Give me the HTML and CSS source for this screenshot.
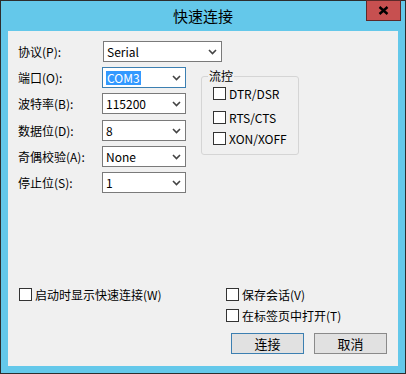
FILE: index.html
```html
<!DOCTYPE html>
<html lang="zh-CN">
<head>
<meta charset="UTF-8">
<title>快速连接</title>
<link rel="stylesheet" href="styles.css">
</head>
<body>

<div class="window">
  <div class="titlebar">
    <span></span>
    <div class="title">快速连接</div>
    <div class="close">
      <svg width="11" height="9" viewBox="0 0 11 9"><path d="M1.5 1 L9.5 8 M9.5 1 L1.5 8" stroke="#000" stroke-width="2.4"/></svg>
    </div>
  </div>

  <div class="client">
    <div class="row proto">
      <span class="label">协议(P):</span>
      <div class="combo wide"><span>Serial</span><svg class="arrow" width="9" height="6" viewBox="0 0 9 6"><polyline points="1,1 4.5,4.5 8,1" fill="none" stroke="#444" stroke-width="1.6"/></svg></div>
    </div>

    <div class="main">
      <div class="fields">
        <div class="row">
          <span class="label">端口(O):</span>
          <div class="combo focus"><span class="sel">COM3</span><svg class="arrow" width="9" height="6" viewBox="0 0 9 6"><polyline points="1,1 4.5,4.5 8,1" fill="none" stroke="#444" stroke-width="1.6"/></svg></div>
        </div>
        <div class="row">
          <span class="label">波特率(B):</span>
          <div class="combo"><span>115200</span><svg class="arrow" width="9" height="6" viewBox="0 0 9 6"><polyline points="1,1 4.5,4.5 8,1" fill="none" stroke="#444" stroke-width="1.6"/></svg></div>
        </div>
        <div class="row">
          <span class="label">数据位(D):</span>
          <div class="combo"><span>8</span><svg class="arrow" width="9" height="6" viewBox="0 0 9 6"><polyline points="1,1 4.5,4.5 8,1" fill="none" stroke="#444" stroke-width="1.6"/></svg></div>
        </div>
        <div class="row">
          <span class="label">奇偶校验(A):</span>
          <div class="combo"><span>None</span><svg class="arrow" width="9" height="6" viewBox="0 0 9 6"><polyline points="1,1 4.5,4.5 8,1" fill="none" stroke="#444" stroke-width="1.6"/></svg></div>
        </div>
        <div class="row">
          <span class="label">停止位(S):</span>
          <div class="combo"><span>1</span><svg class="arrow" width="9" height="6" viewBox="0 0 9 6"><polyline points="1,1 4.5,4.5 8,1" fill="none" stroke="#444" stroke-width="1.6"/></svg></div>
        </div>
      </div>

      <fieldset class="flow">
        <legend>流控</legend>
        <div class="check first"><span class="box"></span>DTR/DSR</div>
        <div class="check second"><span class="box"></span>RTS/CTS</div>
        <div class="check third"><span class="box"></span>XON/XOFF</div>
      </fieldset>
    </div>

    <div class="bottom">
      <div class="check"><span class="box"></span>启动时显示快速连接(W)</div>
      <div class="opts">
        <div class="check"><span class="box"></span>保存会话(V)</div>
        <div class="check"><span class="box"></span>在标签页中打开(T)</div>
      </div>
    </div>

    <div class="buttons">
      <div class="btn default">连接</div>
      <div class="btn">取消</div>
    </div>
  </div>
</div>

</body>
</html>
```

FILE: styles.css
```css
body {
  margin: 0;
  font-family: "Noto Sans CJK SC", sans-serif;
  font-size: 12px;
  color: #000;
}

.window {
  width: 406px;
  height: 374px;
  box-sizing: border-box;
  border: 1px solid #2d2d2d;
  background-color: #64c8ea;
  display: flex;
  flex-direction: column;
}

.titlebar {
  height: 30px;
  display: grid;
  grid-template-columns: 1fr auto 1fr;
}

.title {
  font-size: 15px;
  line-height: 29px;
}

.close {
  justify-self: end;
  align-self: start;
  width: 35px;
  height: 21px;
  box-sizing: border-box;
  margin-right: 4px;
  margin-top: -1px;
  background-color: #c75050;
  border: 1px solid #5c2a2a;
  display: flex;
  justify-content: center;
  align-items: center;
}

.client {
  flex: 1;
  margin: 0 7px 7px;
  background-color: #f0f0f0;
  display: flex;
  flex-direction: column;
  padding: 10px 11px 12px 10px;
}

.row {
  display: flex;
  align-items: center;
  height: 21px;
}

.label {
  width: 84px;
  flex-shrink: 0;
}

.proto .label {
  width: 85px;
}

.combo {
  width: 84px;
  height: 21px;
  box-sizing: border-box;
  border: 1px solid #7a7a7a;
  background-color: #fff;
  display: flex;
  align-items: center;
  justify-content: space-between;
  padding: 0 4px 0 3px;
}

.combo.wide {
  width: 119px;
}

.combo.focus {
  border-color: #3c7fb1;
}

.sel {
  background-color: #3399ff;
  color: #fff;
  line-height: 14px;
  padding: 0 1px;
}

.arrow {
  flex-shrink: 0;
  margin-top: 1px;
}

.main {
  display: flex;
  align-items: flex-start;
  margin-top: 5px;
}

.fields {
  display: flex;
  flex-direction: column;
  gap: 5.25px;
}

.flow {
  width: 98px;
  box-sizing: border-box;
  margin: 1px 0 0 15px;
  padding: 0 0 9px 11px;
  border: 1px solid #d5d5d5;
  border-radius: 3px;
}

.flow legend {
  padding: 0 1px;
  margin-left: -5px;
  line-height: 16px;
}

.check {
  display: flex;
  align-items: center;
  gap: 3px;
  height: 13px;
  white-space: nowrap;
}

.flow .first {
  margin-top: 3px;
}

.flow .second {
  margin-top: 11px;
}

.flow .third {
  margin-top: 8px;
}

.box {
  width: 13px;
  height: 13px;
  box-sizing: border-box;
  border: 1px solid #333;
  background-color: #fff;
  flex-shrink: 0;
}

.bottom {
  margin-top: auto;
  padding-left: 1px;
  display: grid;
  grid-template-columns: 207px auto;
}

.opts {
  display: flex;
  flex-direction: column;
  gap: 8px;
}

.buttons {
  display: flex;
  justify-content: flex-end;
  gap: 10px;
  margin-top: 11px;
}

.btn {
  width: 73px;
  height: 21px;
  box-sizing: border-box;
  border: 1px solid #8a8a8a;
  background-color: #e1e1e1;
  display: flex;
  justify-content: center;
  align-items: center;
  font-size: 13px;
}

.btn.default {
  border-color: #3c7fb1;
}
```
